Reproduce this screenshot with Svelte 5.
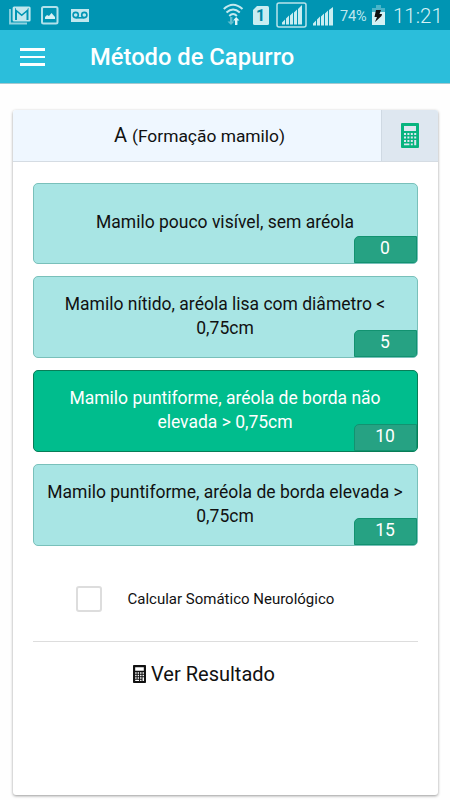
<script>
	const options = [
		{ text: 'Mamilo pouco visível, sem aréola', points: 0 },
		{ text: 'Mamilo nítido, aréola lisa com diâmetro < 0,75cm', points: 5 },
		{ text: 'Mamilo puntiforme, aréola de borda não elevada > 0,75cm', points: 10 },
		{ text: 'Mamilo puntiforme, aréola de borda elevada > 0,75cm', points: 15 }
	];
	let selected = $state(10);
	let somatic = $state(false);
</script>

{#snippet calculator()}
	<svg class="calculator" viewBox="0 0 18 25">
		<path
			fill="currentColor"
			fill-rule="evenodd"
			d="M1 0h16q1 0 1 1v23q0 1-1 1H1q-1 0-1-1V1q0-1 1-1zM3 3v5h12V3zM3 10v2h2v-2zM6.4 10v2h2v-2zM9.8 10v2h2v-2zM13.2 10v2h2v-2zM3 13.5v2h2v-2zM6.4 13.5v2h2v-2zM9.8 13.5v2h2v-2zM13.2 13.5v2h2v-2zM3 17v2h2v-2zM6.4 17v2h2v-2zM9.8 17v2h2v-2zM13.2 17v5.2h2V17zM3 20.4v1.8h5.4v-1.8zM9.8 20.4v1.8h2v-1.8z"
		/>
	</svg>
{/snippet}

<div class="screen">
	<div class="status">
		<svg class="mail" width="22" height="19" viewBox="0 0 22 19">
			<path d="M1 3v14.5h17" fill="none" stroke="#8fd3e1" stroke-width="1.8" />
			<rect x="3.6" y=".5" width="18" height="15" rx="1.5" fill="#c0e7ee" />
			<path d="M7 14V4l5.7 5 5.8-5v10" fill="none" stroke="#0095b3" stroke-width="2" />
			<path d="M7 2.5l5.7 4.7 5.8-4.7" fill="none" stroke="#c0e7ee" stroke-width="1.5" />
		</svg>
		<svg class="photo" width="18" height="19" viewBox="0 0 18 19">
			<rect x="1" y="1" width="15.5" height="16.5" rx="1.5" fill="none" stroke="#b1e1eb" stroke-width="2" />
			<path d="M4 13v-2l2-2 2 1 2.5-3L14 11v2z" fill="#d5f1f5" />
		</svg>
		<svg class="voicemail" width="18" height="13" viewBox="0 0 18 13">
			<path fill="#c0e7ee" d="M0 0h18v13H0z" />
			<g fill="none" stroke="#0095b3" stroke-width="1.6">
				<circle cx="4.7" cy="6" r="2.6" />
				<circle cx="13.3" cy="6" r="2.6" />
				<path d="M4.7 8.8h8.6" />
			</g>
		</svg>
		<svg class="wifi" width="21" height="24" viewBox="0 0 21 24">
			<g fill="none" stroke="#c5e9ef" stroke-width="2">
				<path d="M.8 6Q10 -2.5 19.5 6" />
				<path d="M3.5 9.5q6.6-6 13.3 0" />
				<path d="M6.3 13q3.8-3.8 7.6 0" />
			</g>
			<path fill="#62bdce" d="M7 14h2.4v4.5h2L8 22l-3.5-3.5H7z" />
			<path fill="#dff5f8" d="M12 22h2.4v-4.5h2L13.2 14 10 17.5h2z" />
		</svg>
		<svg class="sim" width="16" height="19" viewBox="0 0 16 19">
			<path d="M4 0h10.5Q16 0 16 1.5v16q0 1.5-1.5 1.5h-13Q0 19 0 17.5V4z" fill="#c9edf1" />
			<text x="7.5" y="15.2" text-anchor="middle" font-size="16" font-weight="700" fill="#0087a5">1</text>
		</svg>
		<svg class="signal boxed" width="31" height="26" viewBox="0 0 31 26">
			<rect x="1" y="1" width="29" height="24" rx="2" fill="none" stroke="#b8e4ec" stroke-width="1.5" />
			<path fill="#c9edf1" d="M6 22.5v-2l3-3v5zM10 22.5v-6l3-3v9zM14 22.5v-9l3-3v12zM18 22.5v-12l3-3v15zM22 22.5V7l4-4v19.5z" />
		</svg>
		<svg class="signal" width="20" height="20" viewBox="0 0 20 20">
			<path fill="#c9edf1" d="M0 19.5v-2l3-3v5zM4 19.5v-6l3-3v9zM8 19.5v-9l3-3v12zM12 19.5v-12l3-3v15zM16 19.5V4l4-3v18.5z" />
		</svg>
		<span class="percent">74%</span>
		<svg class="battery" width="13" height="20" viewBox="0 0 13 20">
			<path fill="#4bb5c9" d="M4 0h5v3h4v4H0V3h4z" />
			<path fill="#d3f1f4" d="M0 7h13v13H0z" />
			<path fill="#111" d="M4 5h5L7.5 9H10l-.5 2L3 17l2-5H2.5z" />
		</svg>
		<span class="clock">11:21</span>
	</div>

	<header>
		<button class="menu" aria-label="Menu"><span></span><span></span><span></span></button>
		<h1>Método de Capurro</h1>
	</header>

	<main>
		<div class="card-top">
			<h2>A <small>(Formação mamilo)</small></h2>
			<button class="calc" aria-label="Calcular">{@render calculator()}</button>
		</div>
		<div class="content">
			<div class="options">
				{#each options as option}
					<button
						class="option"
						class:active={selected === option.points}
						onclick={() => (selected = option.points)}
					>
						<span class="label">{option.text}</span>
						<span class="points">{option.points}</span>
					</button>
				{/each}
			</div>
			<label class="check">
				<input type="checkbox" bind:checked={somatic} />
				<span>Calcular Somático Neurológico</span>
			</label>
			<button class="result">{@render calculator()}Ver Resultado</button>
		</div>
	</main>
</div>

<style>
	:global(body) {
		margin: 0;
		background: #fefefe;
	}
	* {
		box-sizing: border-box;
	}
	.screen {
		height: 800px;
		display: flex;
		flex-direction: column;
		font-family: Roboto, sans-serif;
		color: #111;
		overflow: hidden;
	}
	button {
		font: inherit;
		color: inherit;
		border: 0;
		padding: 0;
		background: none;
		cursor: pointer;
	}
	svg {
		display: block;
		flex: none;
	}
	.status {
		height: 30px;
		flex: none;
		display: flex;
		align-items: center;
		padding-left: 9px;
		background: #0095b3;
		color: #bfe7ee;
		white-space: nowrap;
	}
	.photo {
		margin-left: 10px;
	}
	.voicemail {
		margin-left: 12px;
	}
	.wifi {
		margin-left: 134px;
	}
	.sim {
		margin-left: 9px;
	}
	.signal {
		margin-left: 6px;
		margin-top: 2px;
	}
	.boxed {
		margin-left: 7px;
		margin-top: 0;
	}
	.percent {
		width: 39px;
		padding-left: 7px;
		font-size: 14.5px;
		letter-spacing: -0.1px;
		margin-top: 2px;
	}
	.clock {
		margin-left: 8px;
		font-size: 20.5px;
		font-weight: 300;
		margin-top: 2px;
		color: #d5f1f5;
	}
	header {
		height: 54px;
		flex: none;
		display: flex;
		align-items: center;
		padding-left: 20px;
		background: #2bbedb;
		border-bottom: 1px solid #a5c8cf;
	}
	.menu {
		display: flex;
		flex-direction: column;
		gap: 5px;
		width: 25px;
		margin-top: 1px;
	}
	.menu span {
		height: 2.5px;
		background: #fff;
	}
	h1 {
		margin: 1px 0 0 45px;
		font-size: 23.75px;
		font-weight: 500;
		color: #fff;
	}
	main {
		margin: 26px 12.5px 5px;
		flex: 1;
		display: flex;
		flex-direction: column;
		background: #fff;
		border-radius: 3px;
		box-shadow: 0 1px 3px rgba(0, 0, 0, 0.4);
		overflow: hidden;
	}
	.card-top {
		display: flex;
		height: 52px;
		border-bottom: 1px solid #d5dce3;
		background: #eff7ff;
	}
	h2 {
		flex: 1;
		margin: 0;
		padding-left: 6px;
		font-size: 20px;
		font-weight: 400;
		line-height: 50px;
		text-align: center;
	}
	small {
		font-size: 17.4px;
	}
	.calc {
		width: 57px;
		display: flex;
		align-items: center;
		justify-content: center;
		background: #dee7f0;
		border-left: 1px solid #cfd9e3;
		color: #07b47e;
	}
	.calculator {
		width: 18px;
		height: 25px;
	}
	.content {
		padding: 20.5px 20px 0;
		display: flex;
		flex-direction: column;
	}
	.options {
		display: flex;
		flex-direction: column;
		gap: 12px;
	}
	.option {
		position: relative;
		height: 81.75px;
		padding: 0 12px 2px;
		font-size: 17.5px;
		line-height: 24px;
		text-align: center;
		background: #a8e5e4;
		border: 1px solid #79c0ba;
		border-radius: 5px;
		overflow: hidden;
	}
	.active {
		background: #00bd8d;
		border-color: #087d57;
		color: #fff;
	}
	.points {
		position: absolute;
		right: 0;
		bottom: 0;
		width: 63px;
		height: 27px;
		line-height: 23px;
		background: #26a283;
		border: 1px solid #129270;
		border-radius: 5px 0 0 0;
		color: #fff;
	}
	.check {
		display: flex;
		align-items: center;
		height: 92px;
		margin-top: 4.5px;
		padding: 7px 0 0 43px;
		border-bottom: 1.5px solid #ddd;
		font-size: 15px;
	}
	.check input {
		appearance: none;
		width: 26px;
		height: 26px;
		margin: 0 26px 0 0;
		border: 2.5px solid #ddd;
		border-radius: 3px;
	}
	.result {
		display: flex;
		align-items: center;
		justify-content: center;
		gap: 5px;
		height: 64px;
		padding-right: 42px;
		font-size: 20px;
	}
	.result .calculator {
		width: 13px;
		height: 18px;
	}
</style>
